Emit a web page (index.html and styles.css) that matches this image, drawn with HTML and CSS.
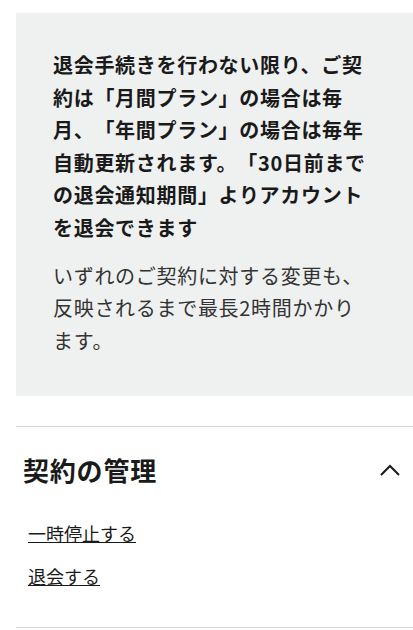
FILE: index.html
```html
<!DOCTYPE html>
<html lang="ja">
<head>
  <meta charset="UTF-8" />
  <meta name="viewport" content="width=device-width, initial-scale=1.0"/>
  <title>契約の管理</title>
  <link rel="stylesheet" href="styles.css">
</head>
<body>

  <div class="notice">
    <p class="notice-strong">退会手続きを行わない限り、ご契約は「月間プラン」の場合は毎月、「年間プラン」の場合は毎年自動更新されます。「30日前までの退会通知期間」よりアカウントを退会できます</p>
    <p class="notice-sub">いずれのご契約に対する変更も、反映されるまで最長2時間かかります。</p>
  </div>

  <div class="manage">
    <div class="manage-head">
      <h2>契約の管理</h2>
      <svg class="chevron" width="20" height="12" viewBox="0 0 20 12">
        <path d="M1 11 L10 2 L19 11" fill="none" stroke="#1a1a1a" stroke-width="2"/>
      </svg>
    </div>
    <ul class="manage-links">
      <li><a href="#">一時停止する</a></li>
      <li><a href="#">退会する</a></li>
    </ul>
  </div>

</body>
</html>
```

FILE: styles.css
```css
body {
  margin: 0;
  font-family: "Noto Sans CJK JP", "Noto Sans", sans-serif;
  color: #1a1a1a;
  background: white;
  text-spacing-trim: space-all;
}

.notice {
  margin: 13px 0 0 16px;
  padding: 36px 42px 39px 37px;
  background: #eff0f0;
}

.notice p {
  margin: 0;
  font-size: 20px;
  letter-spacing: 0.7px;
  line-height: 32.6px;
}

.notice-strong {
  font-weight: bold;
}

.notice .notice-sub {
  margin-top: 15px;
  color: #333;
}

.manage {
  margin: 30px 0 0 16px;
  border-top: 1px solid #d6d6d6;
  border-bottom: 1px solid #d6d6d6;
}

.manage-head {
  display: flex;
  justify-content: space-between;
  align-items: center;
  padding: 25px 13px 0 7px;
}

.manage-head h2 {
  margin: 0;
  font-size: 26px;
  letter-spacing: 0.8px;
  line-height: 36px;
}

.manage-links {
  list-style: none;
  margin: 0;
  padding: 33px 0 38px 12px;
}

.manage-links li {
  line-height: 24px;
}

.manage-links li + li {
  margin-top: 18px;
}

.manage-links a {
  font-size: 18px;
  color: #1a1a1a;
}
```
